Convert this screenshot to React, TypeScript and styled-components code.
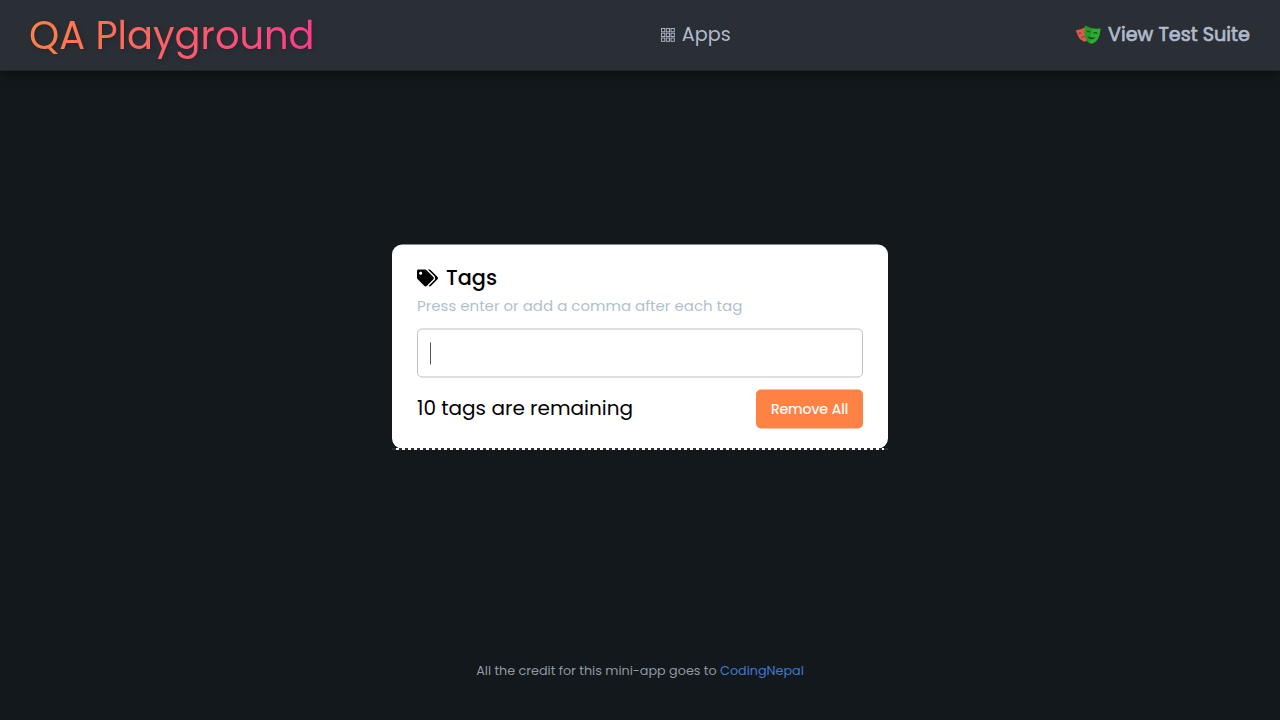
import React from "react";
import styled, { createGlobalStyle } from "styled-components";
import { FaTags } from "react-icons/fa";

const GlobalStyle = createGlobalStyle`
  * { box-sizing: border-box; }
  body {
    margin: 0;
    background: #12181b;
    font-family: Poppins, Inter, "Open Sans", sans-serif;
  }
`;

const Page = styled.div`
  display: flex;
  flex-direction: column;
  height: 100vh;
  overflow: hidden;
`;

const Header = styled.header`
  display: flex;
  align-items: center;
  justify-content: space-between;
  flex: none;
  height: 71px;
  padding: 0 30px 0 29px;
  background: #2a2e35;
  border-bottom: 1px solid #212629;
  box-shadow: 0 2px 10px rgba(0, 0, 0, 0.5);
`;

const Brand = styled.a`
  font-size: 38.4px;
  font-weight: 400;
  line-height: 60px;
  padding: 1px 1px 0 0;
  white-space: nowrap;
  color: transparent;
  background: linear-gradient(90deg, #ff8144, #ff3a8c);
  background-clip: text;
  -webkit-background-clip: text;
  filter: drop-shadow(2px 2px 2px rgba(0, 0, 0, 0.12));
`;

const NavLink = styled.a<{ $bold?: boolean }>`
  display: flex;
  align-items: center;
  gap: 7px;
  font-size: 19.2px;
  line-height: 30px;
  -webkit-text-stroke: ${(p) => (p.$bold ? "0.7px" : "0")} #b0bacb;
  color: #b0bacb;
  white-space: nowrap;

  svg {
    margin-bottom: 1px;
  }
`;

const Main = styled.main`
  display: flex;
  flex: 1;
  flex-direction: column;
  align-items: center;
  padding-top: 174px;
`;

const CardFrame = styled.div`
  width: 496px;
`;

const Card = styled.section`
  height: 204px;
  margin-bottom: -1px;
  padding: 18px 25px 20px;
  border-radius: 10px;
  background: #fff;
  color: #000;
  transform: translateY(-0.5px);
`;

const DashedEdge = styled.div`
  height: 2px;
  padding: 0 4px;
  background: repeating-linear-gradient(90deg, #fff 0 3px, transparent 3px 6px) content-box, #2a2e35;
  position: relative;
`;

const Title = styled.h1`
  display: flex;
  align-items: center;
  gap: 8px;
  margin: 0;
  height: 31px;
  font-size: 20.8px;
  font-weight: 500;
`;

const TitleText = styled.span`
  padding-bottom: 2px;
`;

const Hint = styled.p`
  margin: 0;
  font-size: 15px;
  line-height: 24px;
  color: #b0bfd0;
`;

const TagBox = styled.div`
  display: flex;
  align-items: center;
  height: 49px;
  margin: 11px 0 12px;
  padding: 0 12px;
  border: 1px solid #c0c0c0;
  border-radius: 5px;
`;

const Caret = styled.span`
  width: 1px;
  height: 22px;
  background: #555;
`;

const Details = styled.div`
  display: flex;
  align-items: center;
  justify-content: space-between;
`;

const Remaining = styled.p`
  margin: 0 0 4px;
  font-size: 20px;
`;

const RemoveButton = styled.button`
  width: 107px;
  height: 39px;
  padding: 0 0 2px;
  border: 0;
  border-radius: 5px;
  background: #fd8244;
  color: #fff;
  font: 400 14px/20px Poppins, Inter, sans-serif;
  -webkit-text-stroke: 0.2px #fff;
`;

const Footer = styled.footer`
  flex: none;
  height: 59px;
  text-align: center;
  font-size: 12.75px;
  line-height: 20px;
  color: #9199a3;
`;

const CreditLink = styled.a`
  color: #4379d0;
`;

function Masks() {
  return (
    <svg width="25" height="20" viewBox="0 0 25 20" aria-hidden="true">
      <path d="M0 5.2Q5 5 9 2.2L11 15.5Q10 17 8 16.5Q2 14.5 0 5.2Z" fill="#e2574c" />
      <path d="M2.4 8.7Q3.7 7.4 5.4 8.2M5.4 13Q6.5 11.6 8.3 11.7" fill="none" stroke="#71332f" strokeWidth="1" />
      <path d="M9.2.5Q16 5 24.5 3.2Q24 17 15 18.8Q6.5 15 9.2.5Z" fill="#2ead33" />
      <path d="M9.2.5Q13 3 16 3.4L14 18.4Q6.5 15 9.2.5Z" fill="#1d8d22" opacity=".6" />
      <path d="M11 6.6Q12.5 5.4 14 7.3M17.5 8.3Q19.5 6.8 21.3 8.5" fill="none" stroke="#174f20" strokeWidth="1.1" />
      <path d="M11.2 10.9Q15 13.2 19.6 12.4Q17.8 14.8 14.8 14.2Q12.2 13.6 11.2 10.9Z" fill="#174f20" />
    </svg>
  );
}

const GRID_STEPS = [0.5, 5.25, 10];

function AppsGrid() {
  return (
    <svg width="14" height="14" viewBox="0 0 14 14" fill="none" stroke="#b0bacb" strokeWidth="0.9" aria-hidden="true">
      {GRID_STEPS.map((y) =>
        GRID_STEPS.map((x) => <rect key={`${x}-${y}`} x={x} y={y} width="3.3" height="3.3" />)
      )}
    </svg>
  );
}

export default function App() {
  return (
    <Page>
      <GlobalStyle />
      <Header>
        <Brand>QA Playground</Brand>
        <NavLink><AppsGrid />Apps</NavLink>
        <NavLink $bold><Masks />View Test Suite</NavLink>
      </Header>
      <Main>
        <CardFrame>
          <Card>
            <Title><FaTags size={21} /><TitleText>Tags</TitleText></Title>
            <Hint>Press enter or add a comma after each tag</Hint>
            <TagBox><Caret /></TagBox>
            <Details>
              <Remaining>10 tags are remaining</Remaining>
              <RemoveButton>Remove All</RemoveButton>
            </Details>
          </Card>
          <DashedEdge />
        </CardFrame>
      </Main>
      <Footer>All the credit for this mini-app goes to <CreditLink>CodingNepal</CreditLink></Footer>
    </Page>
  );
}
